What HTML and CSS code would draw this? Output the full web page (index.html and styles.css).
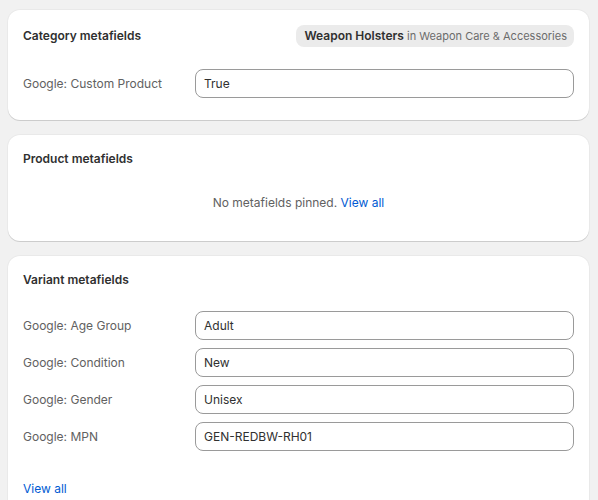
FILE: index.html
```html
<!DOCTYPE html>
<html>
<head>
    <title>Metafields</title>
    <link rel="stylesheet" href="styles.css">
</head>
<body>
    <div class="card">
        <div class="card-header">
            <h2>Category metafields</h2>
            <span class="category-pill"><b>Weapon Holsters</b> in Weapon Care &amp; Accessories</span>
        </div>
        <div class="fields">
            <div class="field-row">
                <label>Google: Custom Product</label>
                <div class="field-input">True</div>
            </div>
        </div>
    </div>

    <div class="card">
        <div class="card-header">
            <h2>Product metafields</h2>
        </div>
        <p class="empty">No metafields pinned. <a href="#">View all</a></p>
    </div>

    <div class="card">
        <div class="card-header">
            <h2>Variant metafields</h2>
        </div>
        <div class="fields">
            <div class="field-row">
                <label>Google: Age Group</label>
                <div class="field-input">Adult</div>
            </div>
            <div class="field-row">
                <label>Google: Condition</label>
                <div class="field-input">New</div>
            </div>
            <div class="field-row">
                <label>Google: Gender</label>
                <div class="field-input">Unisex</div>
            </div>
            <div class="field-row">
                <label>Google: MPN</label>
                <div class="field-input">GEN-REDBW-RH01</div>
            </div>
        </div>
        <a class="view-all" href="#">View all</a>
    </div>
</body>
</html>
```

FILE: styles.css
```css
body {
    font-family: Inter, "Noto Sans", sans-serif;
    font-size: 12px;
    color: #303030;
    background: #f1f1f1;
    margin: 0;
    padding: 10px 9px 0 8px;
}

.card {
    background: #fff;
    border-radius: 12px;
    box-shadow: 0 1px 0 rgba(0, 0, 0, 0.12), 0 0 0 1px rgba(0, 0, 0, 0.03);
    padding: 15px 15px 22px;
    margin-bottom: 15px;
}

.card-header {
    display: flex;
    align-items: center;
    justify-content: space-between;
    min-height: 18px;
}

.card-header h2 {
    margin: 0;
    font-size: 12px;
    font-weight: 600;
    line-height: 18px;
}

.category-pill {
    background: #ebebeb;
    border-radius: 8px;
    padding: 0 7px 0 8px;
    line-height: 22px;
    font-size: 11px;
    color: #6b6b6b;
}

.category-pill b {
    font-size: 12px;
    font-weight: 600;
    color: #303030;
}

.fields {
    display: flex;
    flex-direction: column;
    gap: 8px;
    margin-top: 22px;
}

.field-row {
    display: flex;
    align-items: center;
}

.field-row label {
    width: 172px;
    color: #616161;
}

.field-input {
    flex: 1;
    height: 27px;
    line-height: 27px;
    border: 1px solid #9a9a9a;
    border-radius: 8px;
    padding: 0 8px;
}

.empty {
    margin: 25px 0 6px;
    text-align: center;
    line-height: 20px;
    color: #616161;
}

a {
    color: #005bd3;
    text-decoration: none;
}

.view-all {
    display: block;
    margin-top: 28px;
    line-height: 20px;
}
```
